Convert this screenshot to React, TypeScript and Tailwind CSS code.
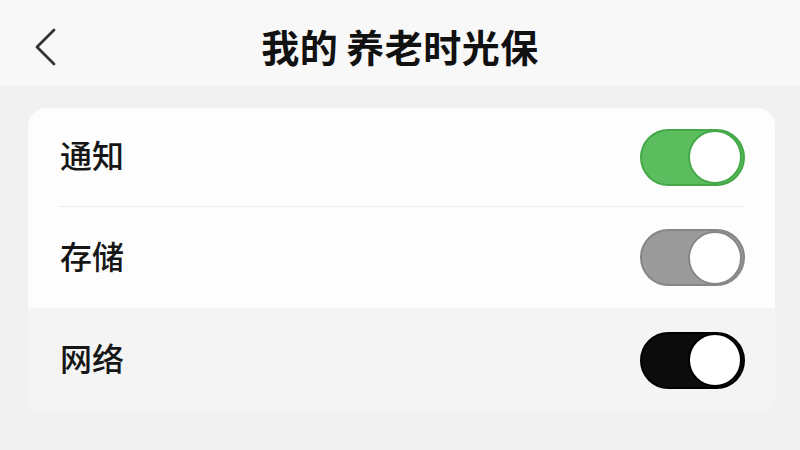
import React from "react";
import clsx from "clsx";

type Tone = "green" | "gray" | "black";

const tracks: Record<Tone, string> = {
  green: "bg-[#5cbd5f] border-[#44a848]",
  gray: "bg-[#9b9b9b] border-[#868686]",
  black: "bg-[#0c0c0c] border-[#000000]",
};

const knobs: Record<Tone, string> = {
  green: "border-[#44a848]",
  gray: "border-[#868686]",
  black: "border-[#000000]",
};

function Toggle({ tone }: { tone: Tone }) {
  return (
    <div
      className={clsx(
        "w-[105px] h-[57px] rounded-full border-2 flex items-center justify-end pr-[1px]",
        tracks[tone]
      )}
    >
      <div className={clsx("w-[54px] h-[54px] rounded-full bg-white border-2", knobs[tone])} />
    </div>
  );
}

interface Row {
  label: string;
  tone: Tone;
  height: string;
  muted?: boolean;
}

const rows: Row[] = [
  { label: "通知", tone: "green", height: "h-[98px]" },
  { label: "存储", tone: "gray", height: "h-[101px]" },
  { label: "网络", tone: "black", height: "h-[104px]", muted: true },
];

export default function App() {
  return (
    <div
      className="w-[800px] h-[450px] bg-[#f1f1f1] overflow-hidden"
      style={{ fontFamily: '"Noto Sans CJK SC", "Noto Sans", sans-serif' }}
    >
      {/* Header */}
      <div className="relative h-[86px] bg-[#f8f8f8] flex items-center justify-center">
        <svg
          className="absolute left-[33px] top-[27px]"
          width="26"
          height="40"
          viewBox="0 0 26 40"
          fill="none"
        >
          <path d="M21 3 L4 20 L21 37" stroke="#333" strokeWidth="2.8" strokeLinecap="round" strokeLinejoin="round" />
        </svg>
        <h1 className="text-[38px] font-bold text-[#111] tracking-[0.5px] mt-[4px]">
          我的<span className="inline-block w-[8px]" />养老时光保
        </h1>
      </div>

      {/* Settings card */}
      <div className="pt-[22px] pl-[28px] pr-[25px]">
        <div className="rounded-[18px] overflow-hidden bg-[#fdfdfd]">
          {rows.map((r, i) => (
            <div key={r.label}>
              {i === 1 && <div className="h-px bg-[#ececec] mx-[30px]" />}
              <div
                className={clsx(
                  "flex items-center justify-between pl-[32px] pr-[30px]",
                  r.height,
                  r.muted && "bg-[#f4f4f4]"
                )}
              >
                <span className="text-[32px] font-medium text-[#161616] mt-[-6px]">{r.label}</span>
                <Toggle tone={r.tone} />
              </div>
            </div>
          ))}
        </div>
      </div>
    </div>
  );
}
